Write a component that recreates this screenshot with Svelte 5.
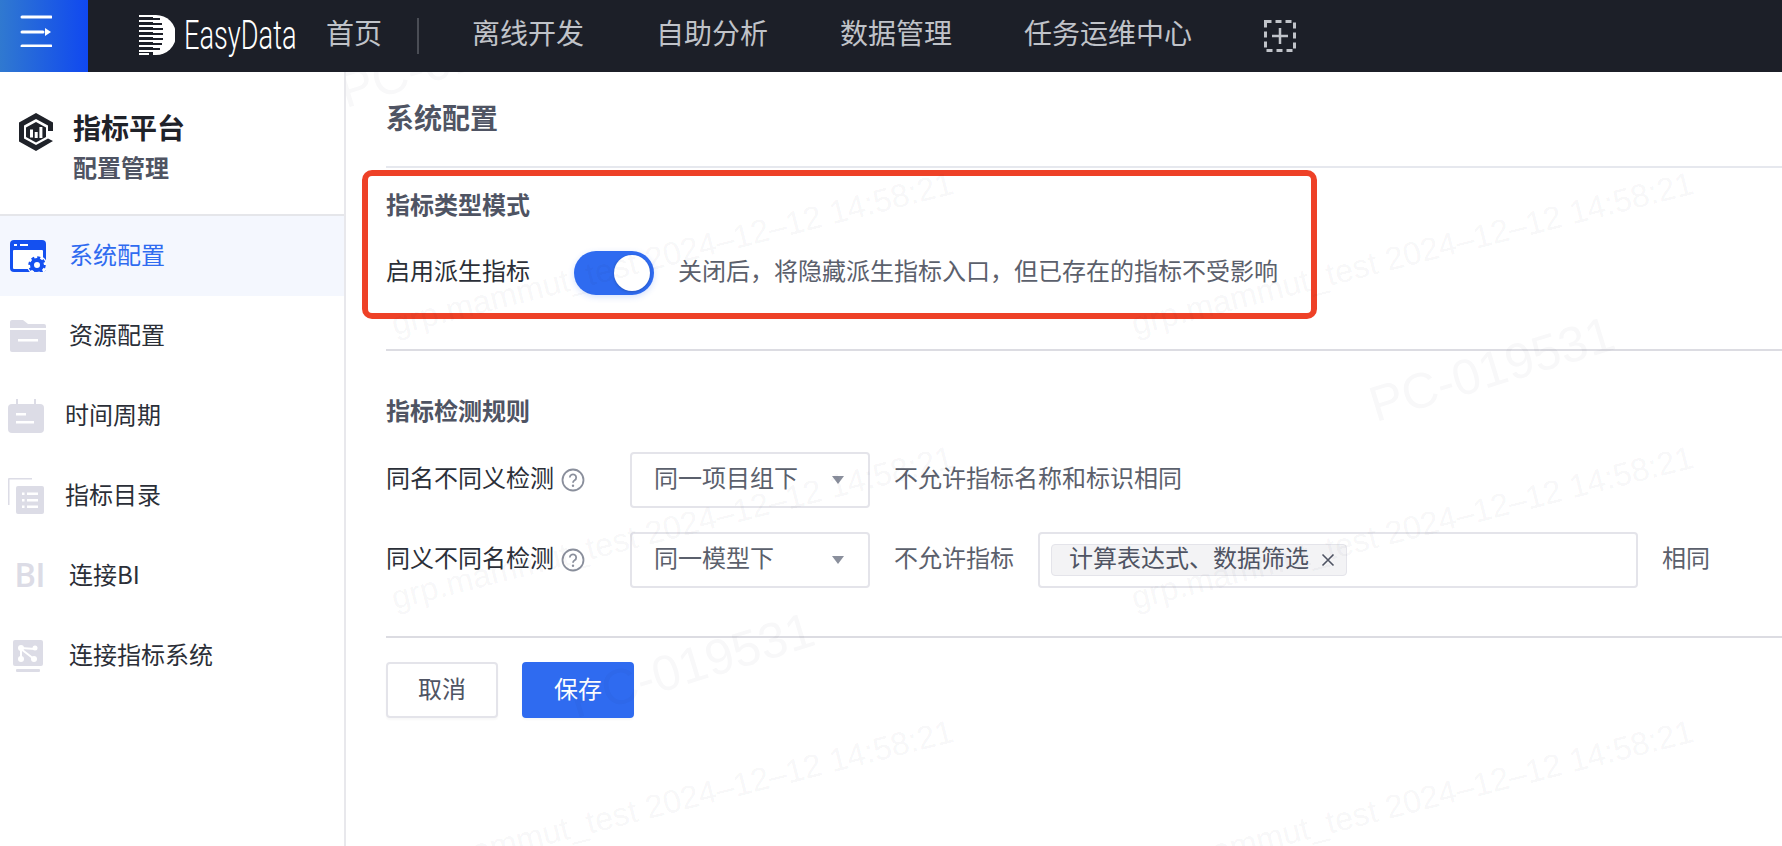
<script>
	const navLinks = ['离线开发', '自助分析', '数据管理', '任务运维中心'];

	const sideItems = [
		{ key: 'system', label: '系统配置', active: true },
		{ key: 'resource', label: '资源配置' },
		{ key: 'period', label: '时间周期', tight: true },
		{ key: 'catalog', label: '指标目录', tight: true },
		{ key: 'bi', label: '连接BI' },
		{ key: 'link', label: '连接指标系统' }
	];

	const mainLeft = 346;
	const mainTop = 72;
	const stamp = 'grp.mammut_test 2024–12–12 14:58:21';
	const stamps = [];
	for (const x of [396, 1136]) {
		for (const y of [340, 614, 888]) {
			stamps.push({ text: stamp, x: x - mainLeft, y: y - mainTop, size: 32.5, angle: -14.2, faint: false });
		}
	}
	// 工号水印
	for (const [x, y] of [[1378, 430], [578, 726], [348, 116]]) {
		stamps.push({ text: 'PC-019531', x: x - mainLeft, y: y - mainTop, size: 50, angle: -17, faint: true });
	}
</script>

<div class="page">
	<header class="topbar">
		<button class="menu-toggle" aria-label="展开菜单">
			<svg width="32" height="32" viewBox="0 0 32 32">
				<g fill="none" stroke="#fff" stroke-width="3" stroke-linecap="round">
					<path d="M2 2h29" />
					<path d="M2 17h21" />
					<path d="M2 31h29" />
				</g>
				<path d="M25 13l6 4-6 4z" fill="#fff" />
			</svg>
		</button>

		<div class="brand">
			<svg class="brand-logo" width="36" height="40" viewBox="0 0 36 40">
				<path d="M14 0h3a20 20 0 0 1 0 40h-3z" fill="#fff" />
				<g fill="#1c1f28">
					<rect x="14" y="3" width="7" height="2" />
					<rect x="14" y="8" width="9" height="2" />
					<rect x="14" y="13" width="10" height="2" />
					<rect x="14" y="18" width="10" height="2" />
					<rect x="14" y="23" width="10" height="2" />
					<rect x="14" y="28" width="9" height="2" />
					<rect x="14" y="33" width="7" height="2" />
				</g>
				<g fill="#fff">
					<rect x="0" y="0" width="14" height="2" />
					<rect x="0" y="5" width="14" height="2" />
					<rect x="0" y="10" width="14" height="2" />
					<rect x="0" y="15" width="14" height="2" />
					<rect x="0" y="20" width="14" height="2" />
					<rect x="0" y="25" width="14" height="2" />
					<rect x="0" y="30" width="14" height="2" />
					<rect x="0" y="35" width="14" height="2" />
					<rect x="0" y="38" width="10" height="2" />
				</g>
			</svg>
			<span class="brand-name">EasyData</span>
		</div>

		<a class="nav-link home" href="#home">首页</a>
		<span class="nav-divider"></span>
		<nav class="nav">
			{#each navLinks as link}
				<a class="nav-link" href="#nav">{link}</a>
			{/each}
			<svg class="add-app" width="32" height="32" viewBox="0 0 32 32">
				<rect x="1.5" y="1.5" width="29" height="29" fill="none" stroke="#c0c3c9" stroke-width="3" stroke-dasharray="6 4" />
				<path d="M8 16h16M16 8v16" stroke="#c0c3c9" stroke-width="2.5" />
			</svg>
		</nav>
	</header>

	<div class="body">
		<aside class="sidebar">
			<div class="product">
				<svg class="product-logo" width="34" height="38" viewBox="0 0 34 38">
					<path d="M17 0L34 9.500v8.500h-5v-5.500L17 6 5 12.500v13L17 32l12-6.500 5 2.500-17 10L0 28.500V9.500z" fill="#1f2229" />
					<path d="M17 9l10 5.500v9.500L17 29.500 7 24V14.500z" fill="#1f2229" />
					<path d="M11 16.500h3v8h-3zM15.700 19h3v6h-3zM20.400 14h3v11h-3z" fill="#fff" />
				</svg>
				<div>
					<div class="product-name">指标平台</div>
					<div class="product-sub">配置管理</div>
				</div>
			</div>

			<ul class="side-menu">
				{#each sideItems as item}
					<li class="side-item" class:active={item.active} class:tight={item.tight}>
						<span class="side-icon">
							{#if item.key === 'system'}
								<svg width="36" height="32" viewBox="0 0 36 32">
									<rect width="36" height="32" rx="4" fill="#1450f0" />
									<rect x="3" y="10" width="30" height="19" rx="1" fill="#fff" />
									<rect x="4" y="4" width="3" height="2" fill="#fff" />
									<rect x="10" y="4" width="8" height="2" fill="#fff" />
									<circle cx="27" cy="25" r="10" fill="#fff" />
									<circle cx="27" cy="25" r="5" fill="none" stroke="#1450f0" stroke-width="4" />
									<circle cx="27" cy="25" r="7.500" fill="none" stroke="#1450f0" stroke-width="2.500" stroke-dasharray="3 2.890" />
								</svg>
							{:else if item.key === 'resource'}
								<svg width="36" height="32" viewBox="0 0 36 32">
									<path d="M0 2a2 2 0 0 1 2-2h11l5 4h16a2 2 0 0 1 2 2v2H0z" fill="#dcdce6" />
									<path d="M0 10h36v20a2 2 0 0 1-2 2H2a2 2 0 0 1-2-2z" fill="#dcdce6" />
									<rect x="8" y="19" width="20" height="2.500" fill="#fff" />
								</svg>
							{:else if item.key === 'period'}
								<svg width="36" height="34" viewBox="0 0 36 34">
									<path d="M8 0h2v5H8zM26 0h2v5h-2z" fill="#dcdce6" />
									<rect y="5" width="36" height="29" rx="4" fill="#dcdce6" />
									<path d="M8 14h10v2.500H8zM8 22h18v2.500H8z" fill="#fff" />
								</svg>
							{:else if item.key === 'catalog'}
								<svg width="36" height="36" viewBox="0 0 36 36">
									<path d="M0 1a1 1 0 0 1 1-1h23v1.500H1.500V27H0z" fill="#dcdce6" />
									<rect x="8" y="8" width="28" height="28" rx="2" fill="#dcdce6" />
									<path d="M14 14.500h2.500V17H14zM19 14.500h11V17H19zM14 21h2.500v2.500H14zM19 21h11v2.500H19zM14 27.500h2.500V30H14zM19 27.500h11V30H19z" fill="#fff" />
								</svg>
							{:else if item.key === 'bi'}
								<span class="bi-mark">BI</span>
							{:else}
								<svg width="36" height="32" viewBox="0 0 36 32">
									<rect x="3" width="30" height="26" rx="2" fill="#dcdce6" />
									<rect x="6" y="29" width="24" height="3" rx="1" fill="#dcdce6" />
									<path d="M11 8l14 1M11 8l0 11M11 9l13 10" stroke="#fff" stroke-width="2" />
									<circle cx="11" cy="8" r="3" fill="#fff" />
									<circle cx="25" cy="8" r="2.500" fill="#fff" />
									<circle cx="11" cy="19" r="3" fill="#fff" />
									<circle cx="24" cy="19" r="3" fill="#fff" />
								</svg>
							{/if}
						</span>
						<span class="side-label">{item.label}</span>
					</li>
				{/each}
			</ul>
		</aside>

		<main class="main">
			<h1 class="page-title">系统配置</h1>

			<section class="type-section">
				<h2>指标类型模式</h2>
				<div class="row">
					<span class="switch-label">启用派生指标</span>
					<span class="switch"><span class="knob"></span></span>
					<span class="hint">关闭后，将隐藏派生指标入口，但已存在的指标不受影响</span>
				</div>
			</section>

			<section class="rule-section">
				<h2>指标检测规则</h2>
				<div class="row rule-row">
					<span class="rule-label">
						<span class="lift">同名不同义检测</span>
						<svg width="24" height="24" viewBox="0 0 24 24">
							<circle cx="12" cy="12" r="10.500" fill="none" stroke="#8a8f9c" stroke-width="1.800" />
							<path d="M8.800 9.500a3.200 3.200 0 1 1 4.800 2.800c-1 .6-1.600 1.200-1.600 2.400" fill="none" stroke="#8a8f9c" stroke-width="1.800" />
							<circle cx="12" cy="17.800" r="1.200" fill="#8a8f9c" />
						</svg>
					</span>
					<div class="select"><span class="lift">同一项目组下</span><span class="caret"></span></div>
					<span class="hint">不允许指标名称和标识相同</span>
				</div>
				<div class="row rule-row">
					<span class="rule-label">
						<span class="lift">同义不同名检测</span>
						<svg width="24" height="24" viewBox="0 0 24 24">
							<circle cx="12" cy="12" r="10.500" fill="none" stroke="#8a8f9c" stroke-width="1.800" />
							<path d="M8.800 9.500a3.200 3.200 0 1 1 4.800 2.800c-1 .6-1.600 1.200-1.600 2.400" fill="none" stroke="#8a8f9c" stroke-width="1.800" />
							<circle cx="12" cy="17.800" r="1.200" fill="#8a8f9c" />
						</svg>
					</span>
					<div class="select"><span class="lift">同一模型下</span><span class="caret"></span></div>
					<span class="hint">不允许指标</span>
					<div class="tag-input">
						<span class="tag">
							<span class="lift">计算表达式、数据筛选</span>
							<svg width="14" height="14" viewBox="0 0 14 14">
								<path d="M1.500 1.500l11 11M12.500 1.500l-11 11" stroke="#4f5463" stroke-width="1.600" />
							</svg>
						</span>
					</div>
					<span class="hint">相同</span>
				</div>
			</section>

			<div class="actions">
				<button class="btn">取消</button>
				<button class="btn primary">保存</button>
			</div>

			<!-- 标注框 -->
			<div class="callout"></div>

			<div class="watermarks">
				{#each stamps as s}
					<span
						class="stamp"
						class:faint={s.faint}
						style="left:{s.x}px;top:{s.y - s.size}px;font-size:{s.size}px;transform:rotate({s.angle}deg)"
					>{s.text}</span>
				{/each}
			</div>
		</main>
	</div>
</div>

<style>
	:global(body) {
		margin: 0;
		background: #fff;
	}
	.page {
		height: 846px;
		display: flex;
		flex-direction: column;
		overflow: hidden;
		font-family: 'Noto Sans CJK SC', sans-serif;
		color: #2b2f38;
	}

	.topbar {
		height: 72px;
		flex: none;
		display: flex;
		align-items: center;
		background: #1c1f28;
	}
	.menu-toggle {
		width: 88px;
		height: 72px;
		padding: 0 0 10px 20px;
		border: none;
		display: flex;
		align-items: center;
		background: linear-gradient(90deg, #3079d0, #1048f0);
	}
	.brand {
		display: flex;
		align-items: center;
		margin-left: 51px;
		width: 187px;
		flex: none;
		gap: 9px;
	}
	.brand-logo {
		flex: none;
		margin-bottom: 2px;
	}
	.brand-name {
		display: inline-block;
		width: 112px;
		flex: none;
		font-family: Roboto, sans-serif;
		font-size: 40px;
		font-weight: 300;
		line-height: 44px;
		color: #fff;
		transform: scaleX(0.68);
		transform-origin: left center;
		white-space: nowrap;
	}
	.nav-link {
		padding-bottom: 8px;
		font-size: 28px;
		line-height: 40px;
		color: #c0c3c9;
		text-decoration: none;
		white-space: nowrap;
	}
	.nav-divider {
		width: 2px;
		height: 36px;
		margin-left: 35px;
		background: #4a4d55;
	}
	.nav {
		display: flex;
		align-items: center;
		gap: 72px;
		margin-left: 53px;
	}

	.body {
		flex: 1;
		display: flex;
		min-height: 0;
	}
	.sidebar {
		width: 346px;
		flex: none;
		box-sizing: border-box;
		border-right: 2px solid #e8e8ec;
	}
	.product {
		height: 144px;
		box-sizing: border-box;
		display: flex;
		gap: 20px;
		padding: 37px 0 0 19px;
		border-bottom: 2px solid #e5e6ea;
	}
	.product-logo {
		flex: none;
		margin-top: 4px;
	}
	.product-name {
		font-size: 28px;
		line-height: 36px;
		font-weight: 600;
		color: #1f2229;
	}
	.product-sub {
		margin-top: 6px;
		font-size: 24px;
		line-height: 32px;
		font-weight: 600;
		color: #4f5463;
	}
	.side-menu {
		list-style: none;
		margin: 0;
		padding: 0;
	}
	.side-item {
		height: 80px;
		display: flex;
		align-items: center;
		gap: 23px;
		padding-left: 10px;
		font-size: 24px;
	}
	.side-item.tight {
		gap: 21px;
		padding-left: 8px;
	}
	.side-item.active {
		background: #f4f7fe;
		color: #2f6bf0;
	}
	.side-icon {
		width: 36px;
		display: flex;
		justify-content: center;
		flex: none;
	}
	.side-label {
		padding-bottom: 5px;
	}
	.bi-mark {
		font-family: Roboto, sans-serif;
		font-size: 33px;
		font-weight: 500;
		line-height: 32px;
		color: #dcdce6;
		padding-left: 4px;
	}

	.main {
		flex: 1;
		position: relative;
		padding-left: 40px;
		overflow: hidden;
		color: #2b2f38;
	}
	.page-title {
		margin: 0;
		height: 96px;
		box-sizing: border-box;
		display: flex;
		align-items: center;
		padding-bottom: 4px;
		font-size: 28px;
		font-weight: 600;
		color: #4f5463;
		border-bottom: 2px solid #e6e8ee;
	}
	h2 {
		margin: 0;
		font-size: 24px;
		line-height: 36px;
		font-weight: 600;
		color: #4f5463;
	}
	.type-section {
		height: 183px;
		box-sizing: border-box;
		padding-top: 18px;
		border-bottom: 2px solid #dcdce2;
	}
	.row {
		display: flex;
		align-items: center;
		font-size: 24px;
	}
	.type-section .row {
		margin-top: 29px;
		height: 44px;
	}
	.switch-label {
		width: 188px;
		padding-bottom: 8px;
	}
	.switch {
		width: 80px;
		height: 44px;
		flex: none;
		box-sizing: border-box;
		display: flex;
		justify-content: flex-end;
		align-items: center;
		padding-right: 4px;
		border-radius: 22px;
		background: #2f6bf0;
		box-shadow: 0 2px 6px rgba(47, 107, 240, 0.2);
	}
	.knob {
		width: 36px;
		height: 36px;
		border-radius: 50%;
		background: #fff;
		box-shadow: 0 1px 3px rgba(0, 0, 0, 0.2);
	}
	.hint {
		color: #5b606c;
		margin-left: 24px;
		padding-bottom: 8px;
		white-space: nowrap;
	}
	.lift {
		padding-bottom: 8px;
	}
	.rule-section {
		height: 287px;
		box-sizing: border-box;
		padding-top: 41px;
		border-bottom: 2px solid #dcdce2;
	}
	.rule-row {
		height: 56px;
		margin-top: 24px;
	}
	.rule-label {
		width: 244px;
		flex: none;
		display: flex;
		align-items: center;
		gap: 7px;
	}
	.select {
		width: 240px;
		height: 56px;
		flex: none;
		box-sizing: border-box;
		display: flex;
		align-items: center;
		justify-content: space-between;
		padding: 0 24px 0 22px;
		border: 2px solid #e4e4ea;
		border-radius: 4px;
		color: #5b606c;
	}
	.caret {
		width: 0;
		height: 0;
		border-left: 6px solid transparent;
		border-right: 6px solid transparent;
		border-top: 8px solid #8a8f9c;
	}
	.tag-input {
		width: 600px;
		height: 56px;
		flex: none;
		margin-left: 24px;
		box-sizing: border-box;
		display: flex;
		align-items: center;
		padding-left: 11px;
		border: 2px solid #e4e4ea;
		border-radius: 4px;
	}
	.tag {
		height: 32px;
		box-sizing: border-box;
		display: flex;
		align-items: center;
		gap: 12px;
		padding: 0 11px 0 17px;
		font-size: 24px;
		color: #4f5463;
		background: #f3f3f5;
		border: 1px solid #e4e4ea;
		border-radius: 4px;
		white-space: nowrap;
	}
	.actions {
		display: flex;
		gap: 24px;
		margin-top: 24px;
	}
	.btn {
		width: 112px;
		height: 56px;
		padding: 0 0 6px;
		font: inherit;
		font-size: 24px;
		color: #4f5463;
		background: #fff;
		border: 2px solid #e4e4ea;
		border-radius: 4px;
		box-shadow: 0 2px 2px rgba(0, 0, 0, 0.03);
	}
	.btn.primary {
		color: #fff;
		background: #2f6bf0;
		border-color: #2f6bf0;
	}
	.callout {
		position: absolute;
		left: 16px;
		top: 98px;
		width: 955px;
		height: 149px;
		box-sizing: border-box;
		border: 6px solid #ee4127;
		border-radius: 10px;
		pointer-events: none;
	}
	.watermarks {
		position: absolute;
		inset: 0;
		pointer-events: none;
	}
	.stamp {
		position: absolute;
		font-family: 'Liberation Sans', sans-serif;
		line-height: 1;
		color: rgba(40, 40, 70, 0.05);
		white-space: nowrap;
		transform-origin: 0 100%;
	}
	.stamp.faint {
		color: rgba(40, 40, 70, 0.03);
	}
</style>
